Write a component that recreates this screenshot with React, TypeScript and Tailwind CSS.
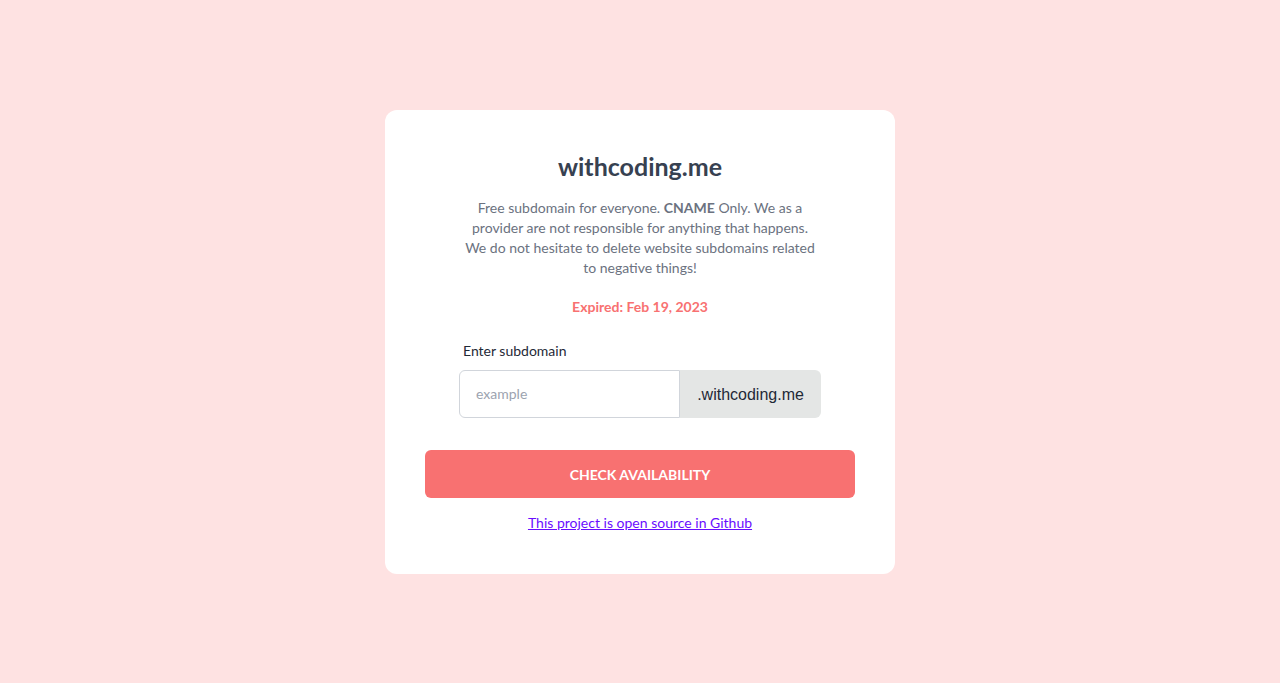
export default function App() {
  return (
    <div
      className="min-h-[683px] w-full bg-[#fee2e2] flex justify-center pt-[110px]"
      style={{ fontFamily: "Lato, 'Noto Sans', sans-serif" }}
    >
      <div className="w-[510px] h-[464px] bg-white rounded-xl px-10 pt-[38px] flex flex-col items-center">
        <h1 className="text-[25px] leading-[36px] font-bold text-[#374151] text-center">withcoding.me</h1>
        <p className="mt-[14px] w-[370px] text-center text-[14px] leading-[20px] text-[#6b7280]">
          Free subdomain for everyone. <b className="font-bold">CNAME</b> Only. We as a
          <br />
          provider are not responsible for anything that happens.
          <br />
          We do not hesitate to delete website subdomains related
          <br />
          to negative things!
        </p>
        <p className="mt-[19px] text-[14px] leading-[20px] font-bold text-[#f87171]">Expired: Feb 19, 2023</p>
        <div className="mt-[24px] w-[362px]">
          <label className="block pl-1 text-[14px] leading-[20px] text-[#1f2937]">Enter subdomain</label>
          <div className="mt-[9px] flex h-[48px]">
            <input
              placeholder="example"
              className="w-[221px] h-full rounded-l-md border border-[#d1d5db] px-4 pb-[1px] text-[14px] text-[#374151] placeholder:text-[#9ca3af] outline-none"
            />
            <div
              className="flex-1 h-full rounded-r-md bg-[#e4e6e5] flex items-center justify-center pt-[2px] text-[16px] text-[#1f2937]"
              style={{ fontFamily: "'Liberation Sans', Arial, sans-serif" }}
            >
              .withcoding.me
            </div>
          </div>
        </div>
        <button className="mt-[32px] w-full h-[48px] rounded-md bg-[#f87171] text-white text-[14px] font-bold uppercase">
          Check availability
        </button>
        <a href="#" className="mt-[15px] text-[14px] leading-[20px] text-[#6a0dff] underline">
          This project is open source in Github
        </a>
      </div>
    </div>
  );
}
